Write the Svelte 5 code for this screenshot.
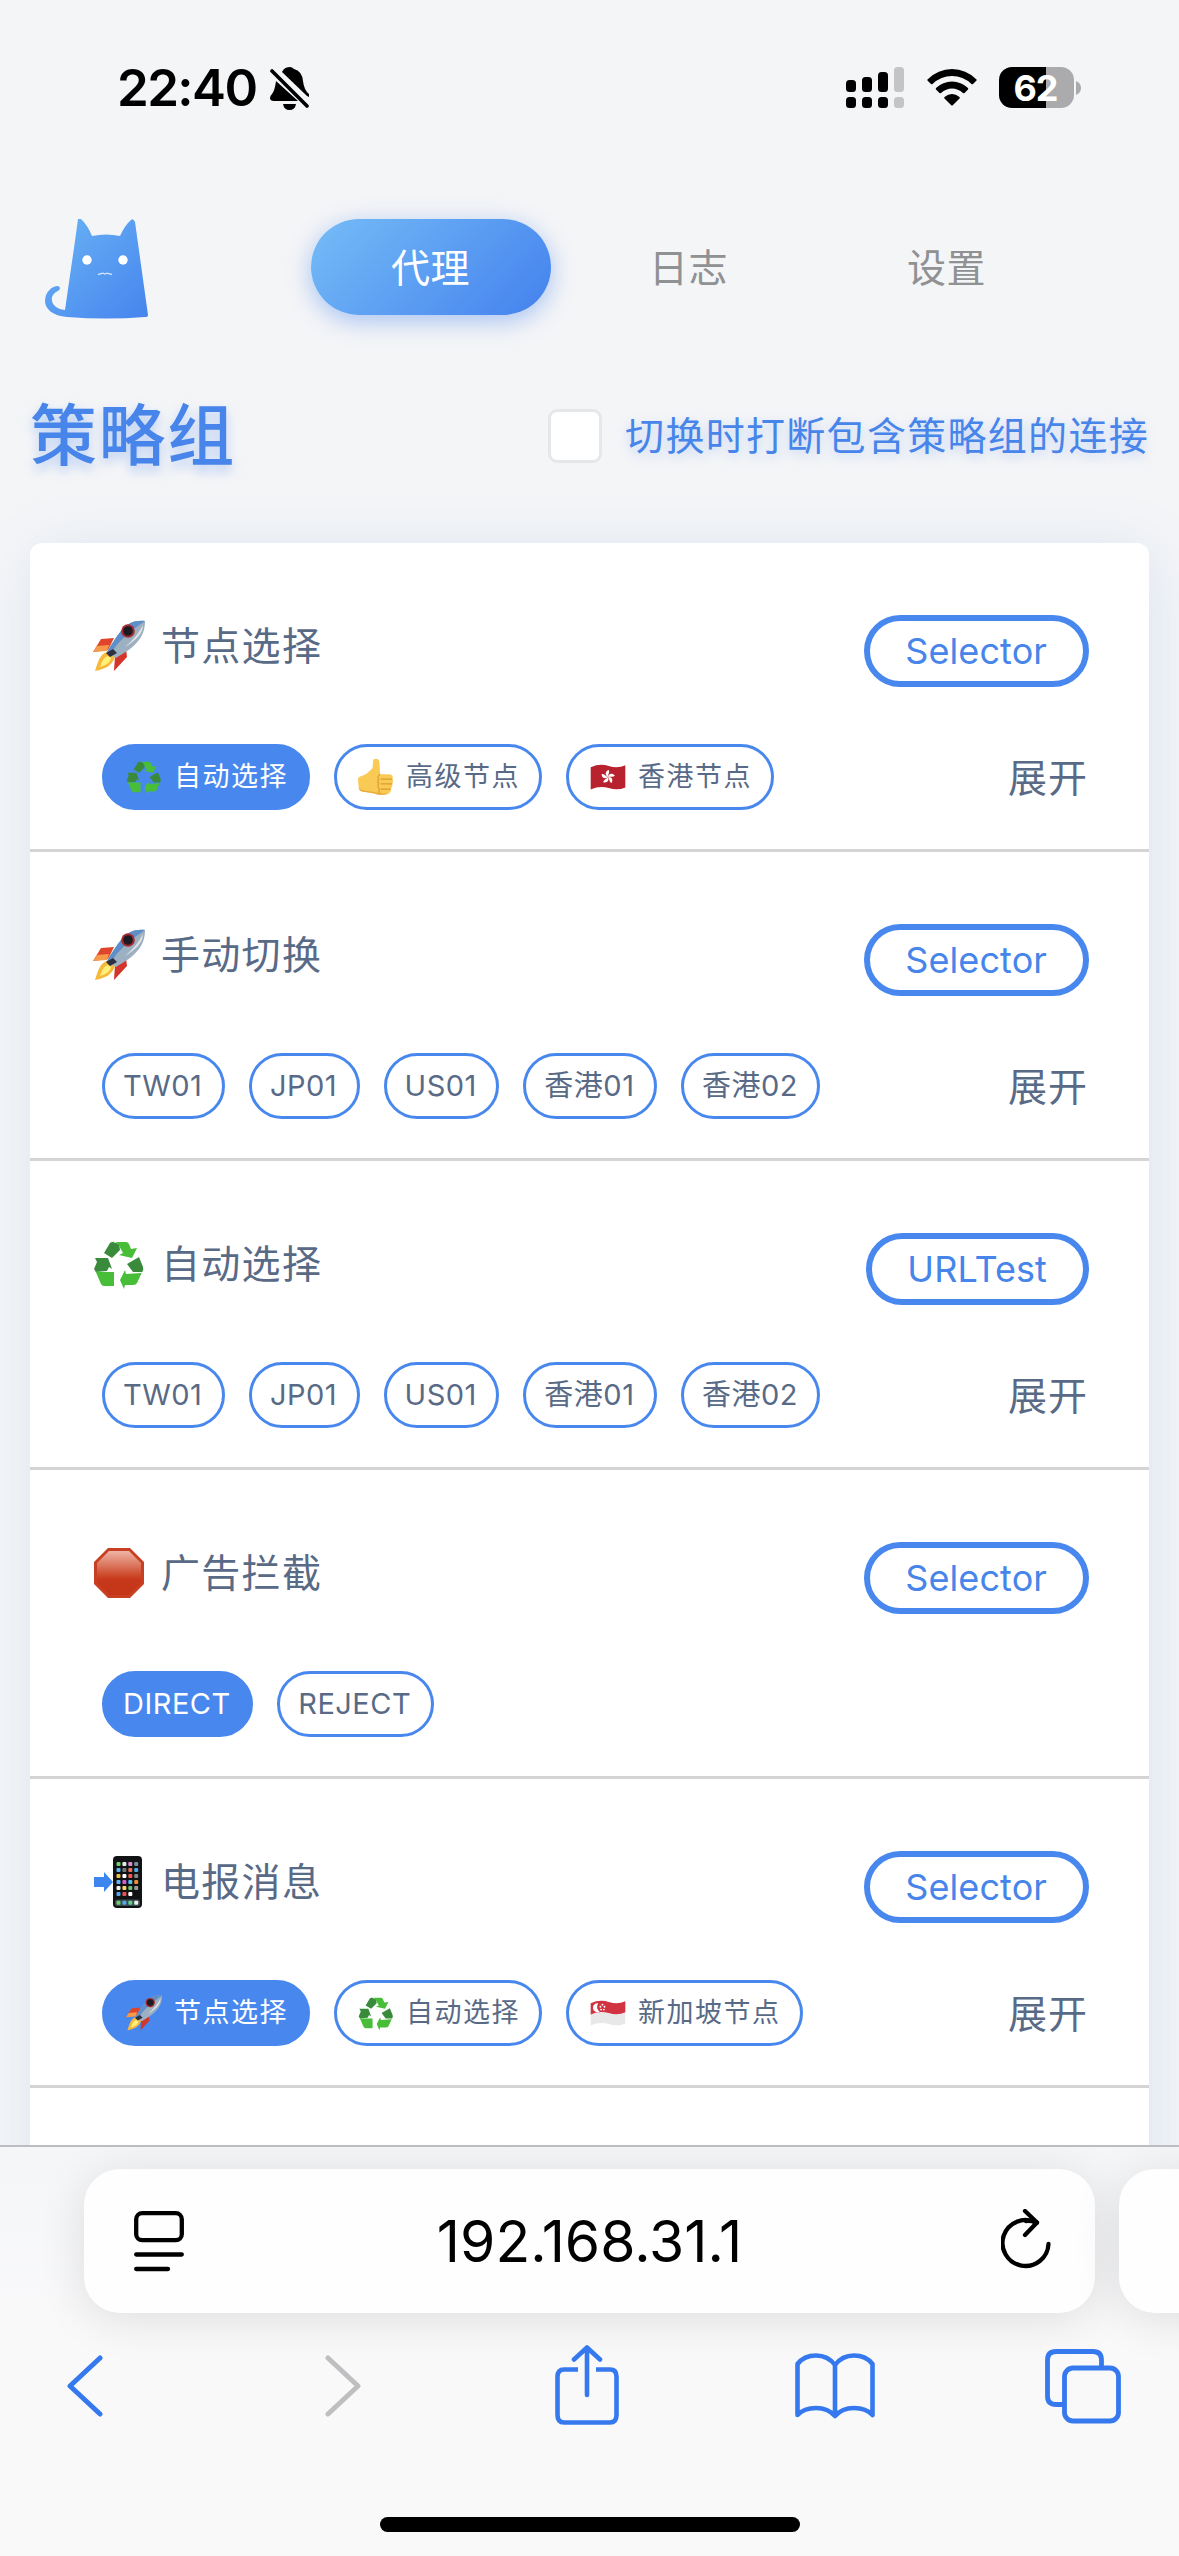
<script>
  const nodes = ['TW01', 'JP01', 'US01', '香港01', '香港02'].map((text) => ({ text }));

  const groups = [
    {
      icon: 'rocket',
      name: '节点选择',
      type: 'Selector',
      more: true,
      chips: [
        { icon: 'recycle', text: '自动选择', active: true },
        { icon: 'thumb', text: '高级节点' },
        { icon: 'hk', text: '香港节点' }
      ]
    },
    { icon: 'rocket', name: '手动切换', type: 'Selector', more: true, chips: nodes },
    { icon: 'recycle', name: '自动选择', type: 'URLTest', more: true, chips: nodes },
    {
      icon: 'stop',
      name: '广告拦截',
      type: 'Selector',
      more: false,
      chips: [{ text: 'DIRECT', active: true }, { text: 'REJECT' }]
    },
    {
      icon: 'phone',
      name: '电报消息',
      type: 'Selector',
      more: true,
      chips: [
        { icon: 'rocket', text: '节点选择', active: true },
        { icon: 'recycle', text: '自动选择' },
        { icon: 'sg', text: '新加坡节点' }
      ]
    }
  ];

  const tabs = ['代理', '日志', '设置'];
  const appColors = ['#6fd06a', '#e8e8e8', '#e08ad0', '#7f8c99', '#58b8f0', '#777', '#f0705a', '#4fa8e8', '#f0c040', '#fff', '#f05a50', '#888', '#60b8f8', '#d060d0', '#50c0f0', '#f08a30', '#eee', '#f5d860', '#70c070', '#999', '#58a8f0', '#f05050', '#fff', '#111'];
</script>

{#snippet emoji(name)}
  <svg class="emoji" viewBox="0 0 52 52" aria-hidden="true">
    {#if name === 'rocket'}
      <path d="M21 18L8 19L0 32L15 30Z" fill="#e0452c" />
      <path d="M0 32L4 26L16 25L14 31Z" fill="#f59a4a" />
      <path d="M33 29L34 37L21 51L22 36Z" fill="#d3352a" />
      <path d="M14 32C8 34 6 38 2 51C12 49 19 46 22 37Z" fill="#f6b93b" />
      <path d="M15 36C10 38 9 42 7 47C13 45 17 43 18 38Z" fill="#fff07a" />
      <path d="M52 1C42 0 34 3 28 11C23 17 18 25 14 32L23 38C31 33 40 28 46 20C51 13 52 7 52 1Z" fill="#9db0c2" />
      <path d="M52 1C42 0 34 3 28 11C23 17 18 25 14 32L18 34C24 22 36 12 52 1Z" fill="#5f8fc9" />
      <path d="M50 5C50 14 42 21 32 27C40 20 46 13 50 5Z" fill="#dfe3e4" />
      <circle cx="35" cy="11" r="6.800" fill="#a62b30" />
      <circle cx="35" cy="11" r="4.800" fill="#1c1a22" />
      <path d="M20 29L13 33L17 37L24 33Z" fill="#2d3040" />
    {:else if name === 'recycle'}
      <path d="M11 15L17 5Q18 4 20 4L26 6L27 12L19 20Z" fill="#3a8a3c" />
      <path d="M18 4H33Q35 4 36 6L38 11L44 10L39 20L26 17L30 15L25 6Q23 3 18 4Z" fill="#48bd38" />
      <path d="M2 20L15 20L19 31L16 29L14 33L3 34L1 31L4 24Z" fill="#3a8a3c" />
      <path d="M2 32Q3 34 6 34H21V48H11Q9 48 8 46Z" fill="#48bd38" />
      <path d="M34 26L46 19L50 29Q51 32 49 34L40 34Z" fill="#3a8a3c" />
      <path d="M27 42L32 32L33 36L48 35Q50 34 50 32L44 45Q43 47 40 47H32L31 51Z" fill="#48bd38" />
    {:else if name === 'stop'}
      <path d="M15 1H37L51 15V37L37 51H15L1 37V15Z" fill="#c93f24" />
      <path d="M16 4H36L48 16V36L36 48H16L4 36V16Z" fill="url(#stop-shine)" />
    {:else if name === 'phone'}
      <path d="M1 21H11V16L20 26L11 36V31H1Z" fill="#3d86f0" />
      <rect x="20" y="0" width="29" height="52" rx="4" fill="#111214" />
      {#each appColors as color, i}
        <rect x={23.5 + (i % 4) * 5.9} y={6 + Math.floor(i / 4) * 6} width="4" height="4" rx="1" fill={color} />
      {/each}
      <rect x="22" y="43.500" width="25" height="6.500" rx="2" fill="#3b4a4d" />
      {#each ['#6fd06a', '#58a8f0', '#5ed08a', '#eee'] as color, i}
        <rect x={23.5 + i * 5.9} y="44.800" width="4" height="4" rx="1" fill={color} />
      {/each}
    {:else if name === 'thumb'}
      <path d="M22 1C26 -2 31 0 31 5L32 22H44Q51 22 50 28Q51 32 50 35Q50 40 48 42Q48 50 42 51Q32 53 24 50L6 47Q1 46 1 41L0 30Q0 26 4 25C11 23 17 18 21 13Z" fill="#f9cb55" />
      <path d="M33 29H49M33 36H49M33 43.500H47" stroke="#d99a2e" stroke-width="1.800" />
      <path d="M32 22Q27 25 30 29Q27 32 30 36Q27 40 31 43Q29 47 32 51" fill="none" stroke="#dfa437" stroke-width="2" />
      <path d="M1 42Q3 45 8 45L25 48Q35 51 43 49L40 51Q30 53 24 50L6 47Q2 46 1 42Z" fill="#e9ab3d" />
    {:else if name === 'hk'}
      <path d="M1 12Q14 6 27 10T51 9V41Q40 46 27 42T1 44Z" fill="#b8222e" />
      <g fill="#fff">
        {#each [0, 72, 144, 216, 288] as angle}
          <path d="M26 26C21 23 22 18 27 16C29 19 26 22 26 26Z" transform="rotate({angle} 26 26)" />
        {/each}
      </g>
    {:else if name === 'sg'}
      <path d="M1 12Q14 6 27 10T51 9V41Q40 46 27 42T1 44Z" fill="#e8e8e8" />
      <path d="M1 12Q14 6 27 10T51 9V25Q40 30 27 26T1 28Z" fill="#d23340" />
      <path d="M12 12A6.500 6.500 0 1 0 14 24A8 8 0 0 1 12 12Z" fill="#fff" />
      <g fill="#fff"><circle cx="18" cy="14" r="1.300" /><circle cx="15" cy="17" r="1.300" /><circle cx="21" cy="17" r="1.300" /><circle cx="16" cy="21" r="1.300" /><circle cx="20" cy="21" r="1.300" /></g>
    {/if}
  </svg>
{/snippet}

<svg class="defs" aria-hidden="true">
  <defs>
    <linearGradient id="stop-shine" x1="0" y1="0" x2="0" y2="1">
      <stop offset="0" stop-color="#efb5a6" />
      <stop offset="0.55" stop-color="#cd4a2c" />
      <stop offset="0.65" stop-color="#c73819" />
      <stop offset="1" stop-color="#c53619" />
    </linearGradient>
    <linearGradient id="cat-fill" x1="0" y1="0" x2="1" y2="1">
      <stop offset="0" stop-color="#6ab4f5" />
      <stop offset="1" stop-color="#4684ee" />
    </linearGradient>
  </defs>
</svg>

<div class="screen">
  <main class="page">
    <div class="status">
      <span class="time">22:40</span>
      <svg class="bell" viewBox="0 0 40 43">
        <path d="M20 0C15 0 13 3 12 5L37 29L39 30V27Q34 23 33 14Q32 4 24 2Q22 0 20 0ZM6 14L28 34H4Q0 34 0 31Q0 29 2 27Q5 23 6 14ZM13 37H26Q25 43 19.500 43T13 37Z" fill="#000" />
        <path d="M2 4L37 39" stroke="#000" stroke-width="3.600" stroke-linecap="round" />
      </svg>
      <div class="indicators">
        <svg class="signal" viewBox="0 0 60 42">
          <g fill="#000">
            <rect x="1" y="13" width="10" height="12" rx="3.500" /><rect x="17" y="10" width="10" height="15" rx="3.500" /><rect x="33" y="5" width="10" height="20" rx="3.500" />
            <rect x="1" y="30" width="10" height="11" rx="3.500" /><rect x="17" y="30" width="10" height="11" rx="3.500" /><rect x="33" y="30" width="10" height="11" rx="3.500" />
          </g>
          <g fill="#c4c4c6"><rect x="49" y="0" width="10" height="25" rx="3.500" /><rect x="49" y="30" width="10" height="11" rx="3.500" /></g>
        </svg>
        <svg class="wifi" viewBox="0 0 50 37">
          <path d="M0.500 10.500Q11 0 25 0T49.500 10.500Q50 11 49.500 11.500L46 15Q45 15.500 44.500 15Q36 7 25 7T5.500 15Q5 15.500 4 15L0.500 11.500Q0 11 0.500 10.500Z" />
          <path d="M9 19Q16 12.500 25 12.500T41 19Q41.500 19.500 41 20.500L37.500 24Q37 24.500 36 24Q31 19.500 25 19.500T14 24Q13 24.500 12.500 24L9 20.500Q8.500 19.500 9 19Z" />
          <path d="M17.500 28Q21 25 25 25T32.500 28Q33 28.500 32.500 29.500L26 36Q25 37 24 36L17.500 29.500Q17 28.500 17.500 28Z" />
        </svg>
        <div class="battery"><span>62</span></div>
        <svg class="nub" viewBox="0 0 5 14"><path d="M0 0Q5 2 5 7T0 14Z" fill="#ababad" /></svg>
      </div>
    </div>

    <header>
      <svg class="cat" viewBox="0 0 104 100">
        <path d="M33 0Q35 -1 37 1Q43 7 47 17Q61 14 75 17Q80 6 86 1Q88 -1 90 3L103 96Q103 98 100 98Q62 101 22 98C8 97 0 90 0 82C0 73 7 67 13 67Q17 69 13 72C3 76 5 90 20 91L30 22Z" fill="url(#cat-fill)" />
        <circle cx="42" cy="41" r="4.700" fill="#fff" /><circle cx="78" cy="41" r="4.700" fill="#fff" />
        <path d="M53 55.500L58 54.200L60 55L62 54.200L67 55.500" fill="none" stroke="#cfe3fc" stroke-width="1.300" />
      </svg>
      <nav>
        {#each tabs as tab, i}
          <a class:active={i === 0} href="#{i}">{tab}</a>
        {/each}
      </nav>
    </header>

    <div class="heading">
      <h1>策略组</h1>
      <div class="check"><span class="box"></span><span class="label">切换时打断包含策略组的连接</span></div>
    </div>

    <section class="card">
      {#each groups as group}
        <article>
          <div class="head">
            <h2>{@render emoji(group.icon)}<span>{group.name}</span></h2>
            <span class="badge">{group.type}</span>
          </div>
          <div class="foot">
            <div class="chips">
              {#each group.chips as chip}
                <span class="chip" class:active={chip.active} class:pictured={chip.icon}>
                  {#if chip.icon}{@render emoji(chip.icon)}{/if}<span>{chip.text}</span>
                </span>
              {/each}
            </div>
            {#if group.more}<span class="more">展开</span>{/if}
          </div>
        </article>
      {/each}
    </section>
  </main>

  <footer>
    <div class="addresses">
      <div class="address">
        <svg class="reader" viewBox="0 0 50 61"><g fill="none" stroke="#000" stroke-width="4.300" stroke-linecap="round"><rect x="2.200" y="2.200" width="45.600" height="27" rx="6" /><path d="M2.200 43.500H47.800M2.200 58H34" /></g></svg>
        <span class="url">192.168.31.1</span>
        <svg class="reload" viewBox="0 0 50 60"><g fill="none" stroke="#000" stroke-width="4.300" stroke-linecap="round" stroke-linejoin="round"><path d="M35 13.500A23 23 0 1 0 47.500 35" /><path d="M24 2L36 13.500L24 26" /><path d="M36 13.500Q30 11.500 25 12" /></g></svg>
      </div>
      <div class="address next"></div>
    </div>
    <div class="tools">
      <svg viewBox="0 0 36 62" class="back"><path d="M33 3L3 31L33 59" fill="none" stroke="#3679ee" stroke-width="5" stroke-linecap="round" stroke-linejoin="round" /></svg>
      <svg viewBox="0 0 36 62" class="forward"><path d="M3 3L33 31L3 59" fill="none" stroke="#bfbfc1" stroke-width="5" stroke-linecap="round" stroke-linejoin="round" /></svg>
      <svg viewBox="0 0 64 80" class="share"><g fill="none" stroke="#3679ee" stroke-width="4.600" stroke-linecap="round" stroke-linejoin="round"><path d="M23 24.500H9Q2.500 24.500 2.500 31.500V70Q2.500 77.500 9 77.500H55Q61.500 77.500 61.500 70V31.500Q61.500 24.500 55 24.500H41" stroke-linecap="butt" /><path d="M32 50V2.500M19 14.500L32 2.500L45 14.500" /></g></svg>
      <svg viewBox="0 0 80 66" class="book"><path d="M40 12Q33 2.500 21 2.500T2.500 11V62Q9 55 21 55T40 63Q47 55 59 55T77.500 62V11Q71 2.500 59 2.500T40 12V63" fill="none" stroke="#3679ee" stroke-width="4.600" stroke-linejoin="round" /></svg>
      <svg viewBox="0 0 76 75" class="windows"><g fill="none" stroke="#3679ee" stroke-width="4.800"><path d="M19 55.500H11Q2.500 55.500 2.500 47V11Q2.500 2.500 11 2.500H48Q56.500 2.500 56.500 11V18" /><rect x="19.500" y="19" width="54" height="53" rx="8.500" /></g></svg>
    </div>
    <div class="home"></div>
  </footer>
</div>

<style>
  :global(body) { margin: 0; background: #f4f5f7; }
  .defs { position: absolute; width: 0; height: 0; }
  .screen {
    width: 1179px; height: 2556px; display: flex; flex-direction: column; overflow: hidden;
    font-family: Inter, 'Noto Sans CJK SC', sans-serif; color: #586a86;
  }
  .page { height: 2145px; overflow: hidden; background: #f4f5f7; }
  svg { display: block; flex: none; }

  .status { height: 219px; box-sizing: border-box; padding: 66px 98px 0 117px; display: flex; align-items: flex-start; color: #000; }
  .time { width: 140px; font-size: 51px; line-height: 44px; font-weight: 600; letter-spacing: -1.6px; white-space: nowrap; }
  .bell { width: 40px; height: 43px; margin: 1px 0 0 13px; }
  .indicators { margin-left: auto; display: flex; align-items: flex-start; padding-top: 1px; }
  .signal { width: 60px; height: 42px; }
  .wifi { width: 50px; height: 37px; margin: 2px 22px 0 22px; }
  .battery { box-sizing: border-box; width: 75px; height: 41px; padding-right: 2px; border-radius: 13px; background: linear-gradient(90deg, #000 47px, #ababad 47px); color: #fff; display: flex; align-items: center; justify-content: center; font-size: 36px; font-weight: 700; letter-spacing: -1px; }
  .nub { width: 5px; height: 14px; margin: 14px 0 0 2px; }

  header { height: 96px; display: flex; align-items: flex-start; padding-left: 45px; }
  .cat { width: 104px; height: 100px; }
  nav { display: flex; margin-left: 162px; gap: 18px; }
  nav a { box-sizing: border-box; width: 240px; height: 96px; padding: 0 1px 4px 0; border-radius: 48px; display: flex; align-items: center; justify-content: center; font-size: 39px; letter-spacing: 0.5px; color: #909193; text-decoration: none; }
  nav a.active { color: #fff; background: linear-gradient(135deg, #73b9f6 5%, #4684ee 95%); box-shadow: 0 6px 24px rgba(70, 132, 238, 0.45); }

  .heading { height: 228px; box-sizing: border-box; padding: 74px 30px 0 30px; display: flex; justify-content: space-between; align-items: flex-start; color: #4785ea; }
  h1 { margin: 0; padding-top: 2px; font-size: 67px; line-height: 90px; font-weight: 500; letter-spacing: 1.6px; text-shadow: 0 6px 12px rgba(70, 132, 238, 0.35); }
  .check { display: flex; align-items: center; padding-top: 20px; }
  .box { box-sizing: border-box; width: 54px; height: 54px; border: 3px solid #e6e7e9; border-radius: 9px; background: #fff; }
  .label { margin-left: 23px; font-size: 39px; line-height: 54px; letter-spacing: 1.3px; white-space: nowrap; text-shadow: 0 4px 12px rgba(70, 132, 238, 0.3); }

  .card { margin: 0 30px; height: 1700px; background: #fff; border-radius: 12px; box-shadow: 4px 6px 60px rgba(70, 120, 200, 0.13); }
  article { height: 309px; box-sizing: border-box; border-bottom: 3px solid #d4d4d5; padding: 72px 60px 0 63px; }
  .head { display: flex; justify-content: space-between; height: 72px; }
  h2 { margin: 0; height: 62px; display: flex; align-items: center; font-size: 39px; font-weight: 400; letter-spacing: 1.3px; }
  .emoji { width: 52px; height: 52px; overflow: visible; }
  h2 span { margin-left: 16px; padding-bottom: 6px; }
  .badge { box-sizing: border-box; height: 72px; border: 6px solid #4888ee; border-radius: 36px; padding: 0 36px 0 35px; font-size: 36px; line-height: 60px; color: #4785ea; letter-spacing: 0.1px; }
  .foot { display: flex; justify-content: space-between; align-items: center; margin-top: 57px; padding-left: 9px; height: 66px; }
  .chips { display: flex; gap: 24px; }
  .chip { box-sizing: border-box; height: 66px; border: 3px solid #4888ee; border-radius: 33px; padding: 0 19.5px 0 18px; display: flex; align-items: center; font-size: 29px; line-height: 60px; letter-spacing: 0.5px; white-space: nowrap; }
  .chip.pictured { padding-right: 19px; font-size: 27px; letter-spacing: 1.5px; }
  .chip .emoji { width: 36px; height: 36px; margin: 0 12px 0 3px; }
  .chip.active { background: #4888ee; color: #fff; }
  .more { font-size: 39px; letter-spacing: 1px; padding: 0 1px 5px 0; }

  footer { height: 411px; box-sizing: border-box; border-top: 2px solid #bcbdc0; background: linear-gradient(#f5f6f8, #f9f9fa 45%); overflow: hidden; }
  .addresses { display: flex; gap: 24px; padding: 22px 0 0 84px; }
  .address { flex: none; box-sizing: border-box; width: 1011px; height: 144px; border-radius: 36px; background: #fefefe; box-shadow: 0 6px 48px rgba(0, 0, 0, 0.11); display: flex; align-items: center; justify-content: space-between; padding: 0 44px 0 50px; color: #000; }
  .url { font-size: 57px; letter-spacing: 0; margin-left: -6px; }
  .reader { width: 50px; height: 61px; }
  .reload { width: 50px; height: 60px; margin-bottom: 4px; }
  .tools { display: flex; align-items: center; height: 80px; padding: 33px 0 0 67px; }
  .back, .forward { width: 36px; height: 62px; }
  .forward { margin-left: 222px; }
  .share { width: 64px; height: 80px; margin: 0 0 2px 194px; }
  .book { width: 80px; height: 66px; margin-left: 176px; }
  .windows { width: 76px; height: 75px; margin-left: 170px; }
  .home { width: 420px; height: 15px; border-radius: 8px; background: #000; margin: 91px auto 0; }
</style>
